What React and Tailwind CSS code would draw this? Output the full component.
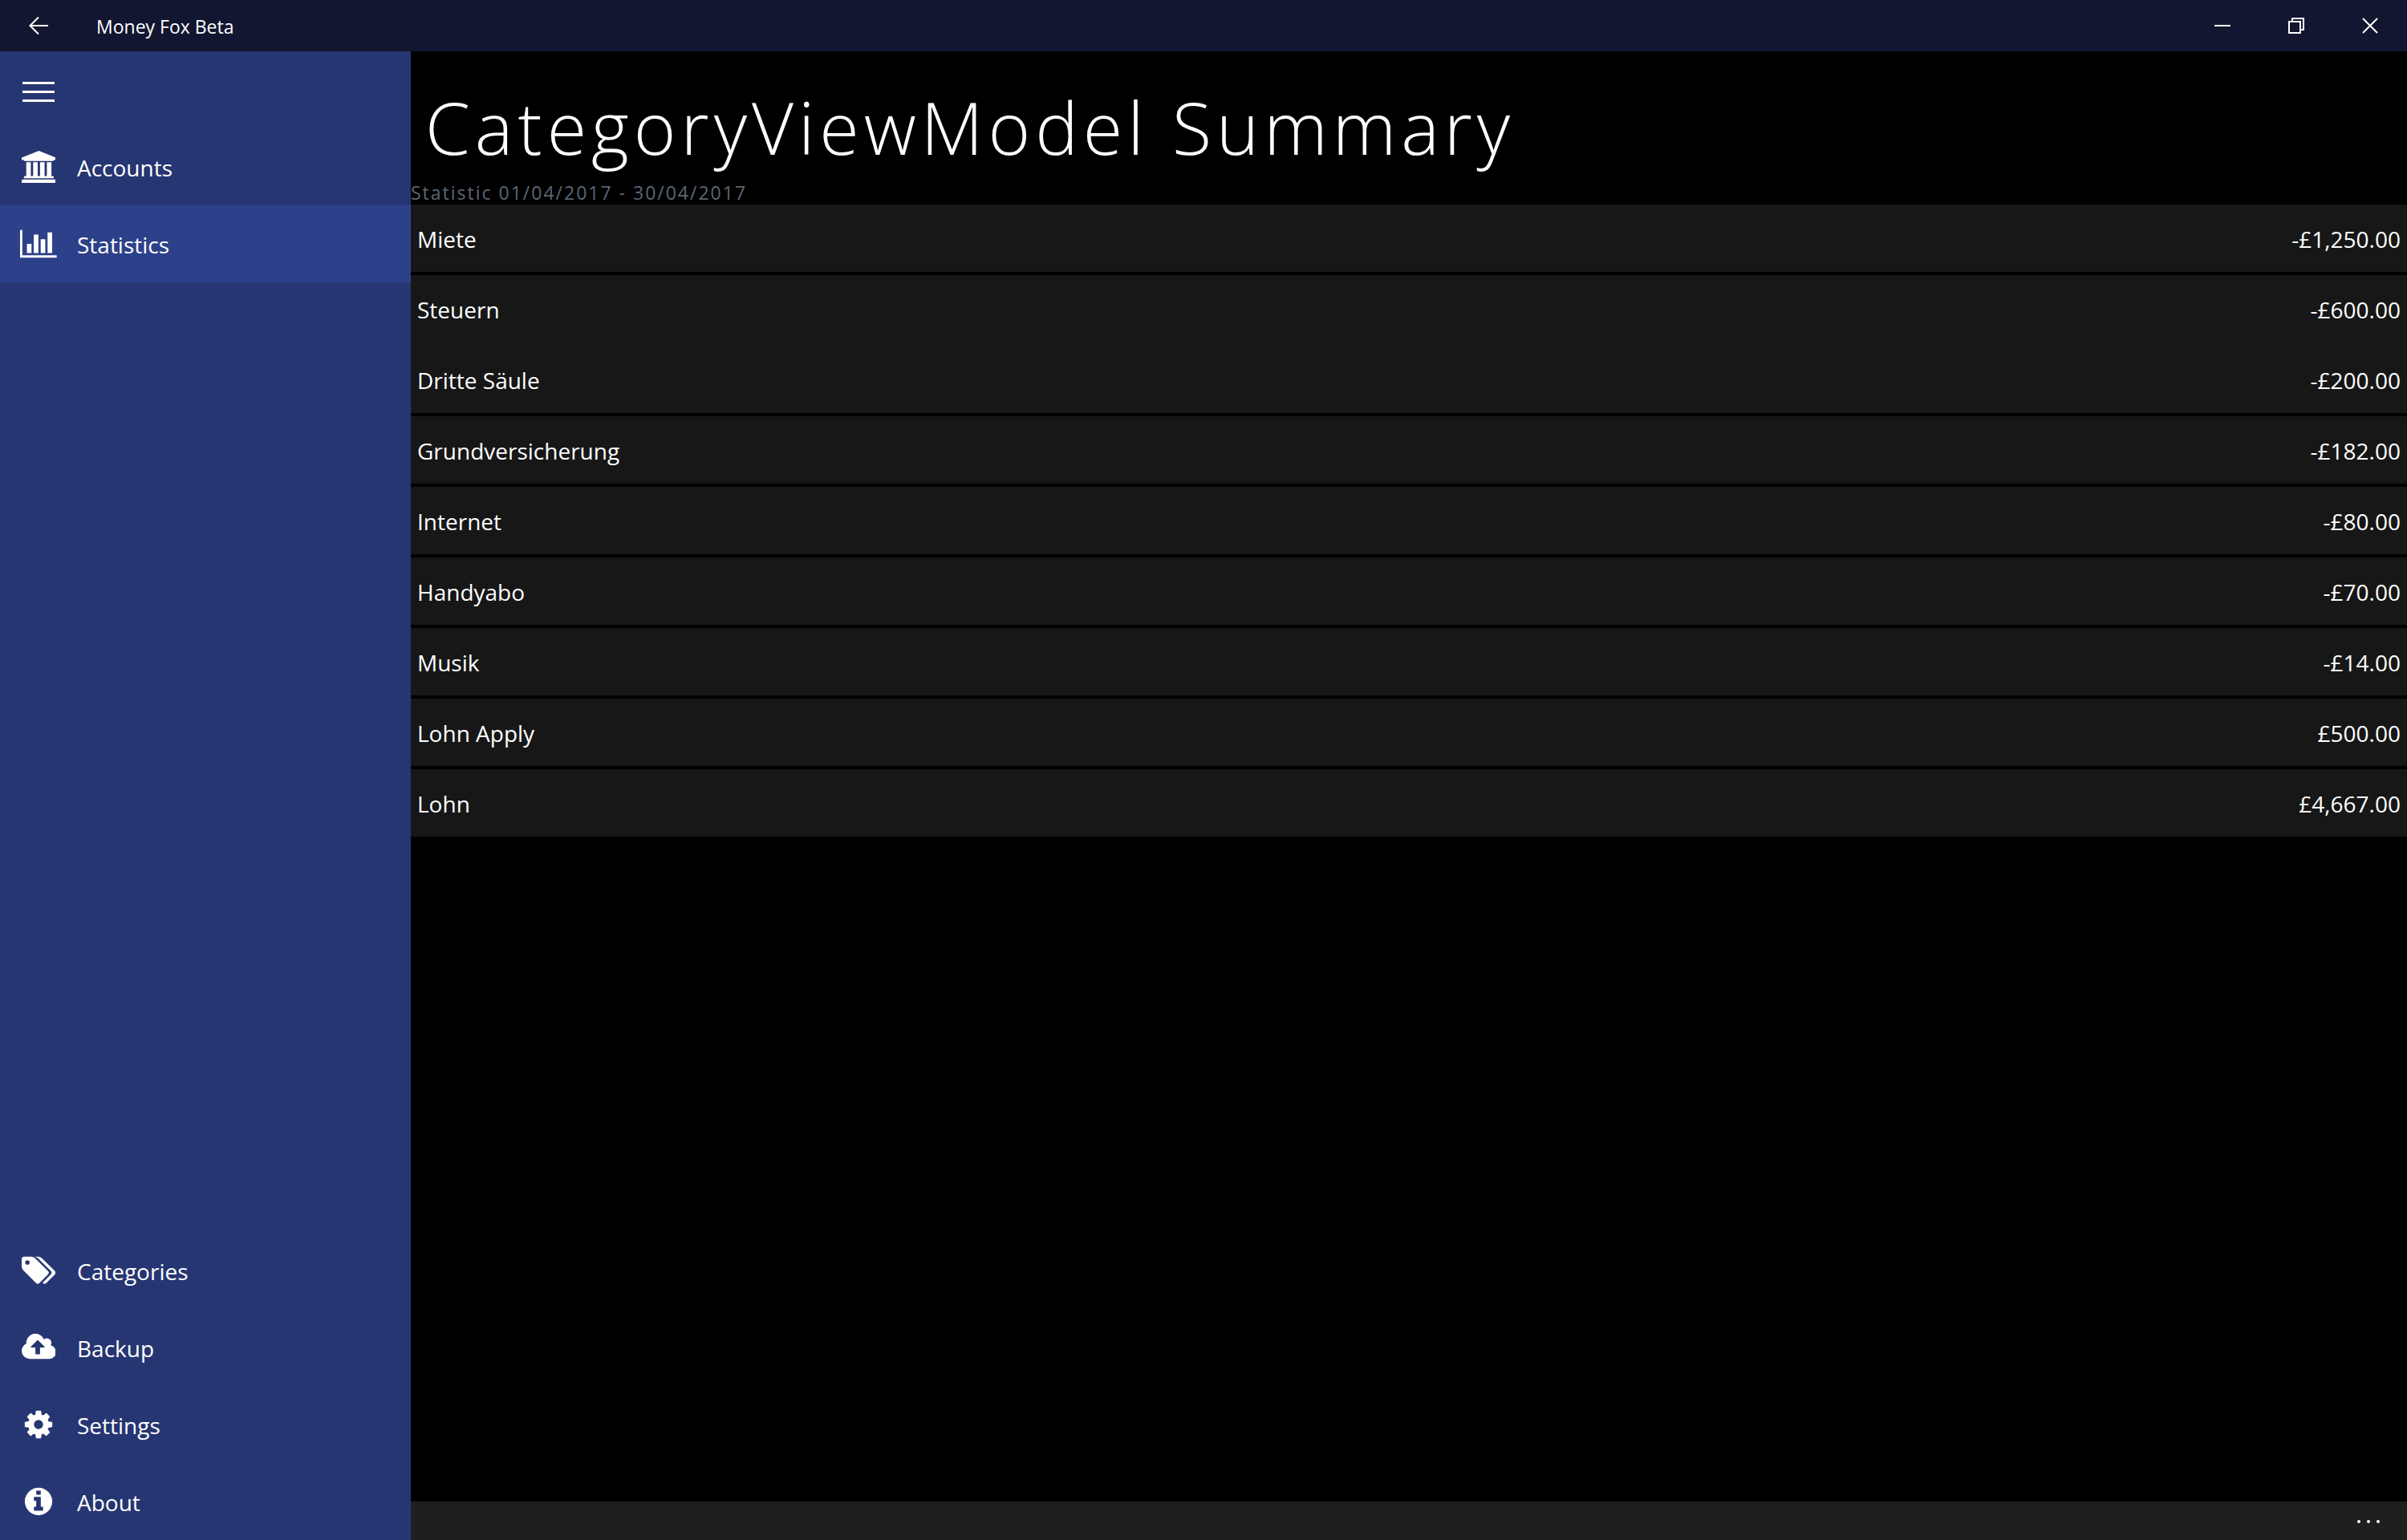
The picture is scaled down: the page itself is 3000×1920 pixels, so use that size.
const ICONS = {
  accounts: {
    box: '0 0 1920 1792',
    d: 'M960 0l960 384v128h-128q0 26-20.5 45t-48.5 19h-1526q-28 0-48.5-19t-20.5-45h-128v-128zm-704 640h256v768h128v-768h256v768h128v-768h256v768h128v-768h256v768h59q28 0 48.5 19t20.5 45v64h-1664v-64q0-26 20.5-45t48.5-19h59v-768zm1595 960q28 0 48.5 19t20.5 45v128h-1920v-128q0-26 20.5-45t48.5-19h1782z',
  },
  statistics: {
    box: '0 0 2048 1792',
    d: 'M640 896v512h-256v-512h256zm384-512v1024h-256v-1024h256zm1024 1152v128h-2048v-1536h128v1408h1920zm-640-896v768h-256v-768h256zm384-384v1152h-256v-1152h256z',
  },
  categories: {
    box: '0 0 1920 1792',
    d: 'M448 448q0-53-37.5-90.5t-90.5-37.5-90.5 37.5-37.5 90.5 37.5 90.5 90.5 37.5 90.5-37.5 37.5-90.5zm1067 576q0 53-37 90l-491 492q-39 37-91 37-53 0-90-37l-715-716q-38-37-64.5-101t-26.5-117v-416q0-52 38-90t90-38h416q53 0 117 26.5t102 64.5l715 714q37 39 37 91zm384 0q0 53-37 90l-491 492q-39 37-91 37-36 0-59-14t-53-45l470-470q37-37 37-90 0-52-37-91l-715-714q-38-38-102-64.5t-117-26.5h224q53 0 117 26.5t102 64.5l715 714q37 39 37 91z',
  },
  backup: {
    box: '0 0 1920 1792',
    d: 'M1280 864q0-14-9-23l-352-352q-9-9-23-9t-23 9l-351 351q-10 12-10 24 0 14 9 23t23 9h224v352q0 13 9.5 22.5t22.5 9.5h192q13 0 22.5-9.5t9.5-22.5v-352h224q13 0 22.5-9.5t9.5-22.5zm640 288q0 159-112.5 271.5t-271.5 112.5h-1088q-185 0-316.5-131.5t-131.5-316.5q0-130 70-240t188-165q-2-30-2-43 0-212 150-362t362-150q156 0 285.5 87t188.5 231q71-62 166-62 106 0 181 75t75 181q0 76-41 138 130 31 213.5 135.5t83.5 238.5z',
  },
  settings: {
    box: '0 0 1792 1792',
    d: 'M1152 896q0-106-75-181t-181-75-181 75-75 181 75 181 181 75 181-75 75-181zm512-109v222q0 12-8 23t-20 13l-185 28q-19 54-39 91 35 50 107 138 10 12 10 25t-9 23q-27 37-99 108t-94 71q-12 0-26-9l-138-108q-44 23-91 38-16 136-29 186-7 28-36 28h-222q-14 0-24.5-8.5t-11.5-21.5l-28-184q-49-16-90-37l-141 107q-10 9-25 9-14 0-25-11-126-114-165-168-7-10-7-23 0-12 8-23 15-21 51-66.5t54-70.5q-27-50-41-99l-183-27q-13-2-21-12.5t-8-23.5v-222q0-12 8-23t19-13l186-28q14-46 39-92-40-57-107-138-10-12-10-24 0-10 9-23 26-36 98.5-107.5t94.5-71.5q13 0 26 10l138 107q44-23 91-38 16-136 29-186 7-28 36-28h222q14 0 24.5 8.5t11.5 21.5l28 184q49 16 90 37l142-107q9-9 24-9 13 0 25 10 129 119 165 170 7 8 7 22 0 12-8 23-15 21-51 66.5t-54 70.5q26 50 41 98l183 28q13 2 21 12.5t8 23.5z',
  },
  about: {
    box: '0 0 1792 1792',
    d: 'M1152 1376v-160q0-14-9-23t-23-9h-96v-512q0-14-9-23t-23-9h-320q-14 0-23 9t-9 23v160q0 14 9 23t23 9h96v320h-96q-14 0-23 9t-9 23v160q0 14 9 23t23 9h448q14 0 23-9t9-23zm-128-896v-160q0-14-9-23t-23-9h-192q-14 0-23 9t-9 23v160q0 14 9 23t23 9h192q14 0 23-9t9-23zm640 416q0 209-103 385.5t-279.5 279.5-385.5 103-385.5-103-279.5-279.5-103-385.5 103-385.5 279.5-279.5 385.5-103 385.5 103 279.5 279.5 103 385.5z',
  },
};

const MAIN_NAV = [
  { id: 'accounts', label: 'Accounts' },
  { id: 'statistics', label: 'Statistics', active: true },
];

const FOOTER_NAV = [
  { id: 'categories', label: 'Categories' },
  { id: 'backup', label: 'Backup' },
  { id: 'settings', label: 'Settings' },
  { id: 'about', label: 'About' },
];

const ROWS = [
  { name: 'Miete', amount: '-£1,250.00' },
  { name: 'Steuern', amount: '-£600.00', joined: true },
  { name: 'Dritte Säule', amount: '-£200.00' },
  { name: 'Grundversicherung', amount: '-£182.00' },
  { name: 'Internet', amount: '-£80.00' },
  { name: 'Handyabo', amount: '-£70.00' },
  { name: 'Musik', amount: '-£14.00' },
  { name: 'Lohn Apply', amount: '£500.00' },
  { name: 'Lohn', amount: '£4,667.00' },
];

function NavItem({ id, label, active }) {
  const icon = ICONS[id];
  return (
    <li>
      <a
        href={'#' + id}
        aria-current={active ? 'page' : undefined}
        className={'flex h-24 items-center ' + (active ? 'bg-[#2c4189]' : '')}
      >
        <span className="flex w-24 shrink-0 justify-center">
          <svg viewBox={icon.box} className="h-10 w-auto" fill="currentColor" aria-hidden="true">
            <path d={icon.d} />
          </svg>
        </span>
        <span className="pt-0.5 text-[28px] leading-10">{label}</span>
      </a>
    </li>
  );
}

function TitleBar() {
  return (
    <header className="flex h-16 shrink-0 items-center bg-[#121630]">
      <button type="button" aria-label="Back" className="flex h-16 w-24 items-center justify-center">
        <svg viewBox="0 0 24 24" className="size-6" fill="none" stroke="currentColor" strokeWidth="2" aria-hidden="true">
          <path d="M24 12H1M12 1.500L1.500 12L12 22.500" />
        </svg>
      </button>
      <span className="flex-1 pt-0.5 pl-6 text-[23px] leading-8">Money Fox Beta</span>
      <button type="button" aria-label="Minimize" className="flex h-16 w-23 items-center justify-center">
        <svg viewBox="0 0 20 20" className="size-5" fill="none" stroke="currentColor" strokeWidth="2" aria-hidden="true">
          <path d="M0 10H20" />
        </svg>
      </button>
      <button type="button" aria-label="Restore" className="flex h-16 w-23 items-center justify-center">
        <svg viewBox="0 0 20 20" className="size-5" fill="none" stroke="currentColor" strokeWidth="2" aria-hidden="true">
          <path d="M1 5H15V19H1ZM5 5V1H19V15H15" />
        </svg>
      </button>
      <button type="button" aria-label="Close" className="flex h-16 w-23 items-center justify-center">
        <svg viewBox="0 0 20 20" className="size-5" fill="none" stroke="currentColor" strokeWidth="2" aria-hidden="true">
          <path d="M1 1L19 19M19 1L1 19" />
        </svg>
      </button>
    </header>
  );
}

function Sidebar() {
  return (
    <nav className="flex w-lg shrink-0 flex-col bg-[#263672]">
      <button type="button" aria-label="Menu" className="flex size-24 items-center justify-center pt-1">
        <svg viewBox="0 0 40 25" className="h-[25px] w-10" fill="currentColor" aria-hidden="true">
          <path d="M0 0h40v3H0zM0 11h40v3H0zM0 22h40v3H0z" />
        </svg>
      </button>
      <ul>
        {MAIN_NAV.map((item) => (
          <NavItem key={item.id} {...item} />
        ))}
      </ul>
      <ul className="mt-auto">
        {FOOTER_NAV.map((item) => (
          <NavItem key={item.id} {...item} />
        ))}
      </ul>
    </nav>
  );
}

export default function App() {
  return (
    <div className="flex min-h-screen flex-col bg-black font-['Open_Sans','Noto_Sans',sans-serif] text-white">
      <TitleBar />
      <div className="flex flex-1">
        <Sidebar />
        <main className="flex min-w-0 flex-1 flex-col">
          <h1 className="pt-[34px] pl-[18px] text-[90px] leading-[120px] font-light tracking-[6px]">
            CategoryViewModel Summary
          </h1>
          <p className="h-[37px] text-[23px] leading-[44px] tracking-[2px] text-[#5c6773]">
            Statistic 01/04/2017 - 30/04/2017
          </p>
          <table className="w-full border-separate border-spacing-0 text-[28px] leading-10">
            <tbody>
              {ROWS.map((row) => (
                <tr
                  key={row.name}
                  className={'h-22 *:border-b-4 ' + (row.joined ? '*:border-[#181818]' : '*:border-black')}
                >
                  <th scope="row" className="bg-[#171717] pt-0.5 pl-2 text-left font-normal">
                    {row.name}
                  </th>
                  <td className="bg-[#171717] pt-0.5 pr-2 text-right">{row.amount}</td>
                </tr>
              ))}
            </tbody>
          </table>
          <footer className="mt-auto flex h-12 justify-end bg-[#1f1f1f]">
            <button type="button" aria-label="More" className="flex h-12 w-24 items-center justify-center pt-0.5">
              <svg viewBox="0 0 28 4" className="h-1 w-7" fill="currentColor" aria-hidden="true">
                <circle cx="2" cy="2" r="2" />
                <circle cx="14" cy="2" r="2" />
                <circle cx="26" cy="2" r="2" />
              </svg>
            </button>
          </footer>
        </main>
      </div>
    </div>
  );
}
